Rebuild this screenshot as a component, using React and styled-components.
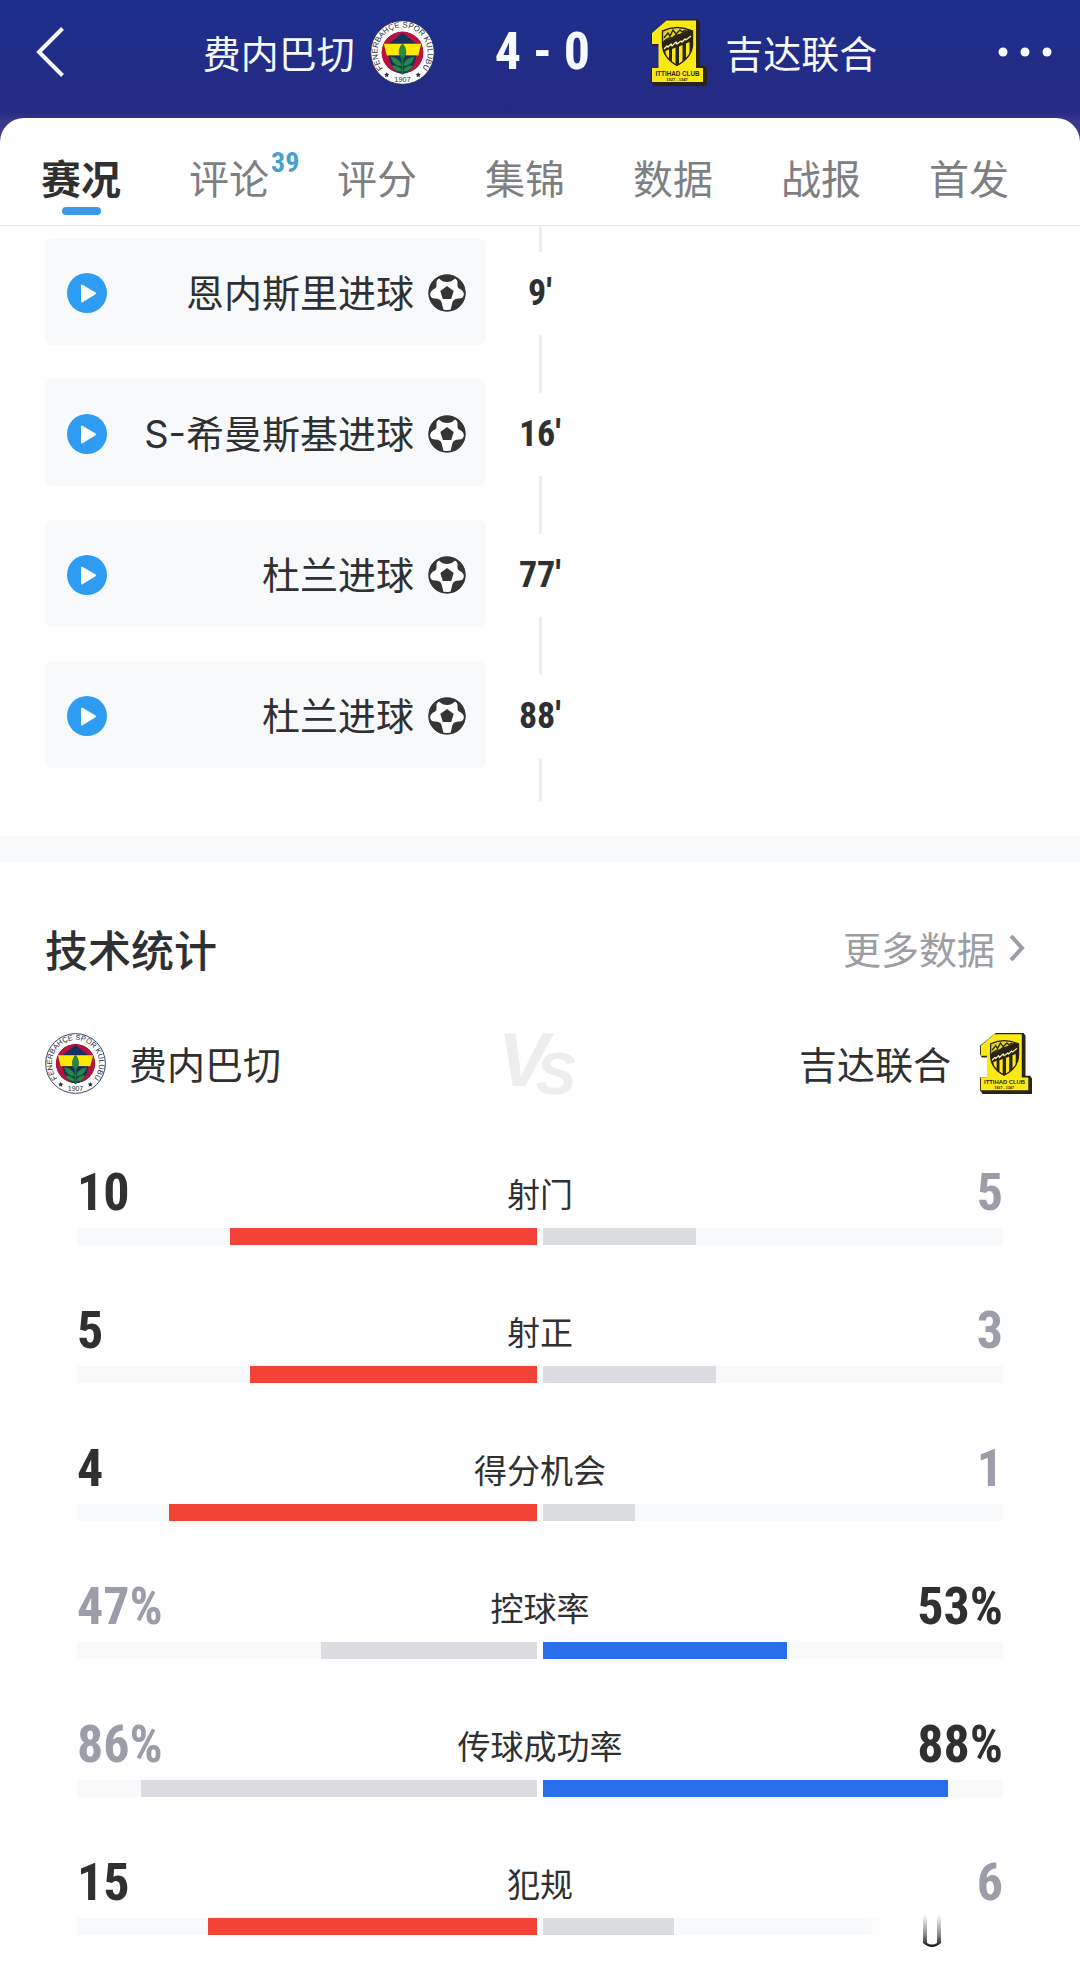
import React from "react";
import styled, { createGlobalStyle } from "styled-components";

const color = {
  ink: "#2f3032",
  muted: "#9b9da8",
  tab: "#7d7f82",
  soft: "#f8f9fb",
  line: "#eeeeee",
  idle: "#dadcdf",
  red: "#f34336",
  blue: "#2a6fea",
  sky: "#2f9cf4",
};

const textFont = `"Noto Sans CJK SC", sans-serif`;
const eventFont = `Inter, "Noto Sans CJK SC", sans-serif`;
const numberFont = `"Roboto Condensed", "Liberation Sans Narrow", "Arial Narrow", "Liberation Sans", sans-serif`;

const GlobalStyle = createGlobalStyle`
  *, *::before, *::after { box-sizing: border-box; }
  body { margin: 0; background: #fff; color: ${color.ink}; font-family: ${textFont}; }
  button { margin: 0; padding: 0; border: 0; background: none; color: inherit; font: inherit; cursor: pointer; }
  ul { margin: 0; padding: 0; list-style: none; }
  svg { display: block; flex: none; }
`;

const Page = styled.div`
  position: relative;
  overflow: hidden;
`;

const Top = styled.div`
  background: linear-gradient(#1d2f8c 0, #252a84 112px, #3a398c 122px);
`;

const Header = styled.header`
  display: grid;
  grid-template-columns: 60px 1fr 60px;
  align-items: center;
  height: 118px;
  padding: 0 28px 14px;
  color: #f6f9ff;
`;

const HeaderButton = styled.button`
  display: flex;
  align-items: center;
  justify-content: ${(p) => p.$side};
  height: 60px;
  padding: 0 0 0 8px;
`;

const Match = styled.div`
  display: flex;
  align-items: center;
  justify-content: center;
  gap: 60px;
`;

const Team = styled.div`
  display: flex;
  align-items: center;
  gap: ${(p) => p.$gap}px;
  font-size: 38px;
  line-height: 56px;
  white-space: nowrap;
`;

const Score = styled.strong`
  font: 700 52px/64px ${numberFont};
  white-space: nowrap;
`;

const Tabs = styled.nav`
  display: flex;
  justify-content: space-between;
  height: 108px;
  padding: 29px 71px 0 41px;
  border-bottom: 1px solid #e8e8ea;
  border-radius: 24px 24px 0 0;
  background: #fff;
`;

const Tab = styled.button`
  position: relative;
  display: flex;
  flex-direction: column;
  align-items: center;
  color: ${(p) => (p.$active ? color.ink : color.tab)};
  font-size: 40px;
  font-weight: ${(p) => (p.$active ? 700 : 400)};
  line-height: 60px;
  white-space: nowrap;

  &::after {
    content: "";
    width: 39px;
    height: 8px;
    border-radius: 4px;
    background: ${(p) => (p.$active ? "#3b99e8" : "transparent")};
  }
`;

const Count = styled.sup`
  position: absolute;
  left: 100%;
  top: 0;
  margin-left: 2px;
  color: #4a9fcf;
  font: 700 28px/32px ${numberFont};
`;

const Timeline = styled.section`
  padding: 0 45px 34px;
`;

const Connector = styled.span`
  display: block;
  width: 3px;
  height: ${(p) => p.$height}px;
  margin: 0 auto;
  background: ${color.line};
`;

const Event = styled.li`
  display: grid;
  grid-template-columns: 1fr 108px 1fr;
  align-items: start;
`;

const EventCard = styled.div`
  display: flex;
  align-items: center;
  gap: 14px;
  height: 107px;
  padding: 2px 20px 0 22px;
  border-radius: 8px;
  background: ${color.soft};
`;

const EventText = styled.span`
  flex: 1;
  font-family: ${eventFont};
  font-size: 38px;
  line-height: 56px;
  text-align: right;
  white-space: nowrap;
`;

const Minute = styled.time`
  display: block;
  font: 700 36px/83px ${numberFont};
  text-align: center;
`;

const Stats = styled.section`
  padding: 58px 45px 35px;
  border-top: 26px solid ${color.soft};
`;

const StatsHead = styled.div`
  display: flex;
  align-items: center;
  justify-content: space-between;
  padding-right: 10px;
`;

const Title = styled.h2`
  margin: 0;
  font-size: 43px;
  font-weight: 500;
  line-height: 56px;
`;

const More = styled.a`
  display: flex;
  align-items: center;
  gap: 14px;
  color: #9c9ea3;
  font-size: 38px;
  line-height: 56px;
  text-decoration: none;
`;

const Versus = styled.div`
  display: grid;
  grid-template-columns: 1fr auto 1fr;
  align-items: center;
  height: 92px;
  margin-top: 41px;
  padding-right: 3px;

  > :last-child { justify-self: end; }
`;

const StatList = styled.ul`
  display: flex;
  flex-direction: column;
  gap: 53px;
  padding: 51px 32px 0;
`;

const StatHead = styled.div`
  display: grid;
  grid-template-columns: 1fr auto 1fr;
  align-items: center;
  height: 66px;
  margin-bottom: 2px;
`;

const Value = styled.strong`
  color: ${(p) => (p.$lead ? color.ink : color.muted)};
  font: 700 52px/64px ${numberFont};
  text-align: ${(p) => p.$align};
`;

const StatLabel = styled.span`
  font-size: 33px;
  line-height: 48px;
`;

const Bars = styled.div`
  display: grid;
  grid-template-columns: 1fr 1fr;
  gap: 6px;
`;

const Track = styled.div`
  display: flex;
  justify-content: ${(p) => p.$from};
  height: 17px;
  background: ${color.soft};
`;

const Fill = styled.div`
  background: ${(p) => p.$fill};
`;

const Smudge = styled.div`
  position: absolute;
  right: 20px;
  bottom: 14px;
  width: 200px;
  height: 46px;
  padding-left: 62px;
  background: linear-gradient(90deg, rgba(255, 255, 255, 0), #fff 30px);
`;

function FenerCrest({ size, id }) {
  return (
    <svg width={size} height={size} viewBox="0 0 66 66" role="img" aria-label="费内巴切队徽">
      <defs>
        <path id={`${id}-arc`} d="M14.2 50.2 A25.5 25.5 0 1 1 51.8 50.2" />
        <clipPath id={`${id}-disc`}>
          <circle cx="33" cy="33" r="21.5" />
        </clipPath>
      </defs>
      <circle cx="33" cy="33" r="32.3" fill="#fff" stroke="#2c3358" strokeWidth="1" />
      <g clipPath={`url(#${id}-disc)`}>
        <circle cx="33" cy="33" r="21.5" fill="#b3153f" />
        <path d="M33 13 L47 24 H19 Z" fill="#16305f" />
        <path d="M14 24 H52 L49 36 H17 Z" fill="#ffe900" />
        <path d="M19 36 H47 C46 46 40 53 33 56 C26 53 20 46 19 36 Z" fill="#16305f" />
      </g>
      <g fill="#27884b" stroke="#14532f" strokeWidth="0.6">
        <path d="M33 24 C38 30 37 36 33 41 C29 36 28 30 33 24 Z" />
        <path d="M33 47 C26 47 22 43 21 37 C27 38 31 41 33 47 Z" />
        <path d="M33 47 C40 47 44 43 45 37 C39 38 35 41 33 47 Z" />
        <path d="M33 52 C28 53 24 51 22 46 C28 46 31 48 33 52 Z" />
        <path d="M33 52 C38 53 42 51 44 46 C38 46 35 48 33 52 Z" />
        <path d="M32.3 38 H33.7 V55 H32.3 Z" />
      </g>
      <text fill="#252a3c" fontFamily="Liberation Sans" fontSize="8">
        <textPath href={`#${id}-arc`} startOffset="50%" textAnchor="middle">FENERBAHÇE SPOR KULÜBÜ</textPath>
      </text>
      <text x="33" y="62.5" fill="#252a3c" fontFamily="Liberation Sans" fontSize="7.5" textAnchor="middle">1907</text>
      <path
        fill="#252a3c"
        d="M17 53l.8 1.7 1.9.2-1.4 1.3.4 1.9-1.7-1-1.7 1 .4-1.9-1.4-1.3 1.9-.2zM49 53l.8 1.7 1.9.2-1.4 1.3.4 1.9-1.7-1-1.7 1 .4-1.9-1.4-1.3 1.9-.2z"
      />
    </svg>
  );
}

function IttihadCrest({ width, height, id }) {
  return (
    <svg width={width} height={height} viewBox="0 0 57 68" preserveAspectRatio="none" role="img" aria-label="吉达联合队徽">
      <defs>
        <clipPath id={`${id}-shield`}>
          <path d="M12.5 13 Q27 6 42.5 13 V26 C42.5 36 35 43 27 47.5 C19 43 12.5 36 12.5 26 Z" />
        </clipPath>
      </defs>
      <path d="M18 1 H48 L50 4 V48 H55 L57 51 V68 H4 L1 64 V50 H9 V28 H3 L1 24 V15 Z" fill="#2b2411" />
      <path d="M16.5 2.5 H46 V50 H53 V64 H2 V50 H8.5 V26 H2 V15 Z" fill="#fbe914" />
      <g clipPath={`url(#${id}-shield)`}>
        <path d="M12 6 H43 V48 H12 Z" fill="#2b2411" />
        <path d="M12 12 Q27 7 40 11 L12 24 Z" fill="#e6d51d" />
        <path d="M14 20l4-5 2 3 3-6 3 4 4-4 2 2 4-2M14 23l5-3 3 0 4-3 4 0" fill="none" stroke="#2b2411" strokeWidth="1.4" />
        <path d="M15.5 33 L19 31.5 V43 H15.5ZM22 31 L25.5 29.5 V48 H22ZM29 28.5 L32.5 27 V48 H29ZM36 25.5 L39.5 24 V42 H36Z" fill="#fbe914" />
        <path d="M14 31 l3-3 1 1 3-3 1 2 4-4 1 2 4-3 1 1 3-3 1 1 5-4" fill="none" stroke="#fff8b0" strokeWidth="1.3" />
      </g>
      <path d="M12.5 13 Q27 6 42.5 13 V26 C42.5 36 35 43 27 47.5 C19 43 12.5 36 12.5 26 Z" fill="none" stroke="#2b2411" strokeWidth="1.4" />
      <text x="27.5" y="57.5" fill="#2b2411" fontFamily="Liberation Sans" fontWeight="700" fontSize="6.3" textAnchor="middle">ITTIHAD CLUB</text>
      <text x="27" y="62.5" fill="#2b2411" fontFamily="Liberation Sans" fontWeight="700" fontSize="4" textAnchor="middle">1927 - 1347</text>
    </svg>
  );
}

function BackIcon() {
  return (
    <svg width="29" height="50" viewBox="0 0 29 50" fill="none" stroke="currentColor" strokeWidth="4" aria-hidden="true">
      <path d="M26.5 1.5 L3 25 L26.5 48.5" />
    </svg>
  );
}

function DotsIcon() {
  return (
    <svg width="54" height="10" viewBox="0 0 54 10" fill="currentColor" aria-hidden="true">
      <circle cx="5" cy="5" r="4.5" />
      <circle cx="27" cy="5" r="4.5" />
      <circle cx="49" cy="5" r="4.5" />
    </svg>
  );
}

function PlayIcon() {
  return (
    <svg width="40" height="40" viewBox="0 0 40 40" aria-hidden="true">
      <circle cx="20" cy="20" r="20" fill={color.sky} />
      <path d="M15 12.5 L28 20.3 L15 28.5 Z" fill="#fff" stroke="#fff" strokeWidth="2" strokeLinejoin="round" />
    </svg>
  );
}

function BallIcon() {
  return (
    <svg width="38" height="38" viewBox="0 0 38 38" aria-hidden="true">
      <circle cx="19" cy="19" r="18.5" fill="#343537" />
      <path
        fill="#fff"
        d="M11 4.5 Q14.5 8 19 8 Q23.5 8 27 4.5 Q30 6 29.5 9.5 Q29 13 31 14.5 Q36 16.5 36 21 Q35 24.5 31 24.5 Q25.5 24.5 24.5 28 Q23.5 32 22.5 36 Q19 37.5 15.5 36 Q14.5 32 13.5 28 Q12.5 24.5 7 24.5 Q3 24.5 2 21 Q2 16.5 7 14.5 Q9 13 8.5 9.5 Q8 6 11 4.5 Z"
      />
      <path d="M19 12 L25.7 17 L23.2 25 H14.8 L12.3 17 Z" fill="#343537" />
      <circle cx="19" cy="19" r="17.8" fill="none" stroke="#343537" strokeWidth="1.6" />
    </svg>
  );
}

function ChevronIcon() {
  return (
    <svg width="16" height="28" viewBox="0 0 16 28" fill="none" stroke="currentColor" strokeWidth="4" aria-hidden="true">
      <path d="M2 2 L13 14 L2 26" />
    </svg>
  );
}

function VsMark() {
  return (
    <svg width="78" height="92" viewBox="0 0 78 92" role="img" aria-label="VS">
      <text
        x="-2"
        y="69"
        fill="#ededee"
        stroke="#fff"
        strokeWidth="3"
        paintOrder="stroke"
        fontFamily="Liberation Sans"
        fontWeight="700"
        fontStyle="italic"
        fontSize="76"
      >
        V<tspan dx="-13" dy="8" fontSize="60">S</tspan>
      </text>
    </svg>
  );
}

function FadedMark() {
  return (
    <svg width="20" height="40" viewBox="0 0 20 40" aria-hidden="true">
      <defs>
        <linearGradient id="fade" x1="0" y1="0" x2="0" y2="1">
          <stop offset="0" stopColor="#555" stopOpacity="0" />
          <stop offset="0.6" stopColor="#444" stopOpacity="0.6" />
          <stop offset="1" stopColor="#111" />
        </linearGradient>
      </defs>
      <path d="M1 4 H5 V33 Q10 36 15 33 V4 H19 V33 Q10 41 1 33 Z" fill="url(#fade)" />
    </svg>
  );
}

const tabs = ["赛况", "评论", "评分", "集锦", "数据", "战报", "首发"];

const events = [
  { text: "恩内斯里进球", minute: "9" },
  { text: "S-希曼斯基进球", minute: "16" },
  { text: "杜兰进球", minute: "77" },
  { text: "杜兰进球", minute: "88" },
];

const stats = [
  { label: "射门", home: 10, away: 5 },
  { label: "射正", home: 5, away: 3 },
  { label: "得分机会", home: 4, away: 1 },
  { label: "控球率", home: 47, away: 53, unit: "%" },
  { label: "传球成功率", home: 86, away: 88, unit: "%" },
  { label: "犯规", home: 15, away: 6 },
];

function StatRow({ label, home, away, unit = "" }) {
  const total = unit ? 100 : home + away;
  const homeLeads = home > away;
  return (
    <li>
      <StatHead>
        <Value $lead={homeLeads} $align="left">{home}{unit}</Value>
        <StatLabel>{label}</StatLabel>
        <Value $lead={!homeLeads} $align="right">{away}{unit}</Value>
      </StatHead>
      <Bars>
        <Track $from="flex-end">
          <Fill $fill={homeLeads ? color.red : color.idle} style={{ width: `${(home / total) * 100}%` }} />
        </Track>
        <Track $from="flex-start">
          <Fill $fill={homeLeads ? color.idle : color.blue} style={{ width: `${(away / total) * 100}%` }} />
        </Track>
      </Bars>
    </li>
  );
}

export default function App() {
  return (
    <Page>
      <GlobalStyle />
      <Top>
        <Header>
          <HeaderButton $side="flex-start" aria-label="返回"><BackIcon /></HeaderButton>
          <Match>
            <Team $gap={15}>费内巴切<FenerCrest size={65} id="head-home" /></Team>
            <Score>4 - 0</Score>
            <Team $gap={18}><IttihadCrest width={57} height={68} id="head-away" />吉达联合</Team>
          </Match>
          <HeaderButton $side="flex-end" aria-label="更多"><DotsIcon /></HeaderButton>
        </Header>
        <Tabs>
          {tabs.map((name, i) => (
            <Tab key={name} $active={i === 0}>
              {name}
              {name === "评论" && <Count>39</Count>}
            </Tab>
          ))}
        </Tabs>
      </Top>

      <Timeline>
        <Connector $height={12} />
        <ul>
          {events.map((e) => (
            <Event key={e.minute}>
              <EventCard>
                <button aria-label="播放"><PlayIcon /></button>
                <EventText>{e.text}</EventText>
                <BallIcon />
              </EventCard>
              <div>
                <Connector $height={14} />
                <Minute>{e.minute}′</Minute>
                <Connector $height={44} />
              </div>
            </Event>
          ))}
        </ul>
      </Timeline>

      <Stats id="stats">
        <StatsHead>
          <Title>技术统计</Title>
          <More href="#stats">更多数据<ChevronIcon /></More>
        </StatsHead>
        <Versus>
          <Team $gap={23}><FenerCrest size={61} id="stat-home" />费内巴切</Team>
          <VsMark />
          <Team $gap={28}>吉达联合<IttihadCrest width={53} height={62} id="stat-away" /></Team>
        </Versus>
        <StatList>
          {stats.map((s) => <StatRow key={s.label} {...s} />)}
        </StatList>
      </Stats>
      <Smudge><FadedMark /></Smudge>
    </Page>
  );
}
